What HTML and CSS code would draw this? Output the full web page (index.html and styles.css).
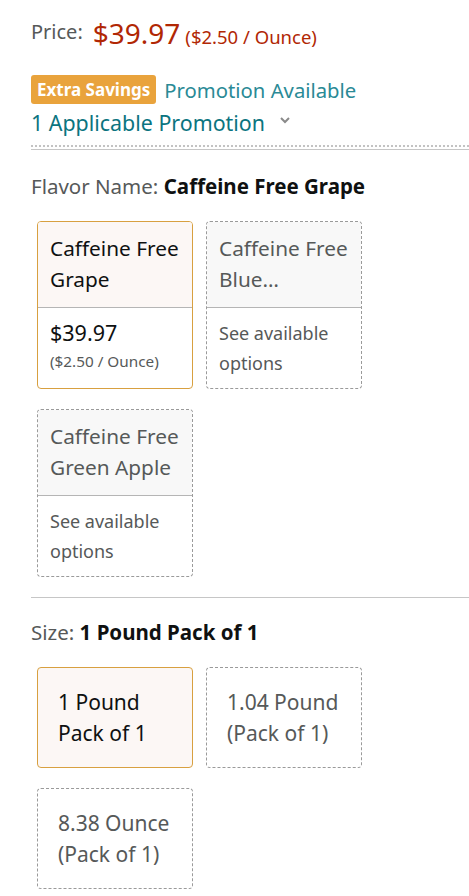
FILE: index.html
```html
<!DOCTYPE html>
<html>
<head>
<meta charset="utf-8">
<link rel="stylesheet" href="styles.css">
</head>
<body>
<div class="page">
  <div class="price-row">
    <span class="price-label">Price:</span>
    <span class="price">$39.97</span>
    <span class="unit">($2.50 / Ounce)</span>
  </div>
  <div class="promo-row">
    <span class="badge">Extra Savings</span>
    <span class="promo-avail">Promotion Available</span>
  </div>
  <div class="applicable">
    <span>1 Applicable Promotion</span>
    <svg class="chev" width="12" height="8" viewBox="0 0 12 8"><path d="M2 2 L6 6 L10 2" fill="none" stroke="#8a8a8a" stroke-width="2"/></svg>
  </div>
  <div class="dotted"></div>
  <div class="solid"></div>

  <div class="var-label">Flavor Name: <b>Caffeine Free Grape</b></div>
  <div class="grid">
    <div class="card selected">
      <div class="card-top">Caffeine Free Grape</div>
      <div class="card-bottom">
        <div class="c-price">$39.97</div>
        <div class="c-unit">($2.50 / Ounce)</div>
      </div>
    </div>
    <div class="card">
      <div class="card-top">Caffeine Free<br>Blue…</div>
      <div class="card-bottom muted">See available options</div>
    </div>
    <div class="card">
      <div class="card-top">Caffeine Free Green Apple</div>
      <div class="card-bottom muted">See available options</div>
    </div>
  </div>

  <div class="solid sep2"></div>

  <div class="var-label size-label">Size: <b>1 Pound Pack of 1</b></div>
  <div class="grid">
    <div class="size selected">1 Pound<br>Pack of 1</div>
    <div class="size">1.04 Pound<br>(Pack of 1)</div>
    <div class="size">8.38 Ounce<br>(Pack of 1)</div>
  </div>
</div>
</body>
</html>
```

FILE: styles.css
```css
* { box-sizing: border-box; }
body {
  margin: 0;
  font-family: "Noto Sans", "Open Sans", sans-serif;
  color: #0f1111;
  background: #fff;
}
.page {
  padding: 14px 0 0 31px;
}
.price-row {
  display: flex;
  align-items: baseline;
  height: 38px;
  line-height: 38px;
}
.price-label {
  font-size: 20px;
  color: #565959;
  margin-right: 10px;
  position: relative;
  top: -5px;
}
.price {
  font-size: 28px;
  color: #B12704;
  margin-right: 5px;
}
.unit {
  font-size: 18.5px;
  color: #B12704;
}
.promo-row {
  margin-top: 23px;
  display: flex;
  align-items: center;
  height: 29px;
}
.badge {
  background: #E9A33C;
  color: #fff;
  font-weight: 700;
  font-size: 17px;
  height: 29px;
  line-height: 29px;
  padding: 0 6px;
  border-radius: 3px;
  margin-right: 8px;
}
.promo-avail {
  color: #2a8a96;
  font-size: 20.3px;
}
.applicable {
  display: flex;
  align-items: center;
  color: #0b7480;
  font-size: 21.4px;
  height: 36px;
}
.chev { margin-left: 14px; margin-top: -4px; }
.dotted {
  margin-top: 5px;
  border-top: 2px dotted #c3c3c3;
}
.solid {
  margin-top: 2px;
  border-top: 1px solid #c6c6c6;
}
.var-label {
  font-size: 20.5px;
  color: #565959;
  margin-top: 22px;
  line-height: 28px;
}
.var-label.size-label { margin-top: 20px; }
.var-label b { color: #0f1111; font-weight: 700; }
.grid {
  display: grid;
  grid-template-columns: 156px 156px;
  column-gap: 13px;
  row-gap: 20px;
  margin: 21px 0 0 6px;
}
.card {
  height: 168px;
  border: 1px dashed #9a9a9a;
  border-radius: 4px;
  display: flex;
  flex-direction: column;
  overflow: hidden;
  color: #565959;
}
.card.selected {
  border: 1px solid #D8A040;
  color: #0f1111;
}
.card-top {
  height: 86px;
  background: #f8f8f8;
  border-bottom: 1px solid #b5b5b5;
  padding: 11px 12px 0 12px;
  font-size: 20.8px;
  line-height: 31px;
}
.card.selected .card-top { background: #fcf7f5; }
.card-bottom {
  padding: 10px 12px 0 12px;
  flex: 1;
}
.c-price { font-size: 21.5px; line-height: 30px; }
.c-unit { font-size: 15.3px; color: #565959; line-height: 26px; }
.muted { font-size: 18px; line-height: 30px; color: #565959; }
.sep2 { margin-top: 20px; }
.size {
  height: 101px;
  border: 1px dashed #9a9a9a;
  border-radius: 4px;
  padding: 19px 20px 0 20px;
  font-size: 21px;
  line-height: 31px;
  color: #565959;
}
.size.selected {
  border: 1px solid #D8A040;
  background: #fcf7f5;
  color: #0f1111;
}
```
